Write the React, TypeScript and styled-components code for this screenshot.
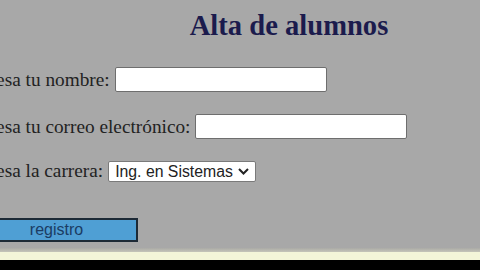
import React from 'react';
import styled, { createGlobalStyle } from 'styled-components';

const GlobalStyle = createGlobalStyle`
  html, body {
    margin: 0;
    padding: 0;
    overflow: hidden;
    background: #a8a8a8;
  }
`;

const Screen = styled.div`
  width: 480px;
  height: 270px;
  display: flex;
  flex-direction: column;
  overflow: hidden;
`;

const Page = styled.div`
  flex: 1;
  background: #a8a8a8;
  overflow: hidden;
`;

const Form = styled.form`
  width: 650px;
  margin-left: -36px;
  display: flex;
  flex-direction: column;
  align-items: flex-start;
  font-family: 'Liberation Serif', 'Times New Roman', serif;
  color: #222;
`;

const Title = styled.h2`
  align-self: stretch;
  margin: 10px 0 0;
  font-size: 28.6px;
  line-height: 32px;
  font-weight: bold;
  text-align: center;
  color: #1b1b4d;
`;

const Row = styled.div<{ top: number }>`
  display: flex;
  align-items: center;
  gap: 5px;
  margin-top: ${p => p.top}px;
`;

const Label = styled.label`
  font-size: 19.3px;
  line-height: 22px;
`;

const TextInput = styled.input`
  box-sizing: border-box;
  width: 212px;
  height: 25px;
  background: #fff;
  border: 1px solid #6e6e6e;
  border-radius: 2px;
  padding: 0 4px;
  font-family: 'Liberation Sans', Arial, sans-serif;
  font-size: 15px;
`;

const SelectBox = styled.div`
  position: relative;
  width: 148px;
  height: 21px;
`;

const Select = styled.select`
  box-sizing: border-box;
  appearance: none;
  width: 100%;
  height: 100%;
  background: #fff;
  border: 1px solid #7a7a7a;
  border-radius: 2px;
  padding: 0 0 0 6px;
  font-family: 'Liberation Sans', Arial, sans-serif;
  font-size: 15.8px;
  color: #222;
`;

const Chevron = styled.svg`
  position: absolute;
  right: 7px;
  top: 7px;
  pointer-events: none;
`;

const Submit = styled.button`
  box-sizing: border-box;
  margin: 36px 0 0 11px;
  width: 163px;
  height: 24px;
  background: #4f9fd4;
  border: 2px solid #1d2a36;
  font-family: 'Liberation Sans', Arial, sans-serif;
  font-size: 16px;
  color: #1b3c63;
  padding: 0;
`;

const Fade = styled.div`
  height: 4px;
  background: linear-gradient(#aaaaa6, #c4c4b8);
`;

const Cream = styled.div`
  height: 8px;
  background: #f3f5d8;
`;

const Bar = styled.div`
  height: 10px;
  background: #000;
`;

export default function App() {
  return (
    <Screen>
      <GlobalStyle />
      <Page>
        <Form onSubmit={e => e.preventDefault()}>
          <Title>Alta de alumnos</Title>
          <Row top={25}>
            <Label htmlFor="nombre">Ingresa tu nombre:</Label>
            <TextInput id="nombre" type="text" />
          </Row>
          <Row top={22}>
            <Label htmlFor="correo">Ingresa tu correo electrónico:</Label>
            <TextInput id="correo" type="text" />
          </Row>
          <Row top={21}>
            <Label htmlFor="carrera">Ingresa la carrera:</Label>
            <SelectBox>
              <Select id="carrera" defaultValue="sistemas">
                <option value="sistemas">Ing. en Sistemas</option>
              </Select>
              <Chevron width="11" height="7" viewBox="0 0 11 7">
                <path d="M1 1 L5.5 5.5 L10 1" fill="none" stroke="#222" strokeWidth="2" />
              </Chevron>
            </SelectBox>
          </Row>
          <Submit type="submit">registro</Submit>
        </Form>
      </Page>
      <Fade />
      <Cream />
      <Bar />
    </Screen>
  );
}
